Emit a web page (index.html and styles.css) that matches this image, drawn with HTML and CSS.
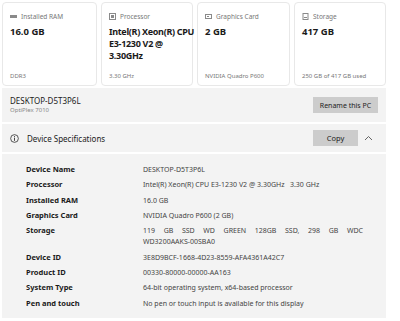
FILE: index.html
```html
<!DOCTYPE html>
<html lang="en">
<head>
    <meta charset="UTF-8">
    <meta name="viewport" content="width=device-width, initial-scale=1.0">
    <title>About</title>
    <link rel="stylesheet" href="styles.css">
</head>
<body>
    <div class="page">
        <div class="cards">
            <div class="card">
                <div class="card-head">
                    <svg width="7" height="7" viewBox="0 0 7 7"><rect x="0" y="2" width="7" height="3" fill="#8a8a8a"/></svg>
                    <span>Installed RAM</span>
                </div>
                <div class="card-value">16.0 GB</div>
                <div class="card-foot">DDR3</div>
            </div>
            <div class="card">
                <div class="card-head">
                    <svg width="7" height="7" viewBox="0 0 7 7"><rect x="0.5" y="0.5" width="6" height="6" fill="none" stroke="#8a8a8a"/><rect x="2" y="2" width="3" height="3" fill="#8a8a8a"/></svg>
                    <span>Processor</span>
                </div>
                <div class="card-value tight">Intel(R) Xeon(R) CPU<br>E3-1230 V2 @<br>3.30GHz</div>
                <div class="card-foot">3.30 GHz</div>
            </div>
            <div class="card">
                <div class="card-head">
                    <svg width="7" height="7" viewBox="0 0 7 7"><rect x="0.5" y="1.5" width="6" height="4" fill="none" stroke="#8a8a8a"/><rect x="2" y="3" width="2" height="1" fill="#8a8a8a"/></svg>
                    <span>Graphics Card</span>
                </div>
                <div class="card-value">2 GB</div>
                <div class="card-foot">NVIDIA Quadro P600</div>
            </div>
            <div class="card">
                <div class="card-head">
                    <svg width="7" height="7" viewBox="0 0 7 7"><rect x="1" y="0.5" width="5" height="6" fill="none" stroke="#8a8a8a"/><rect x="2" y="4" width="3" height="1" fill="#8a8a8a"/></svg>
                    <span>Storage</span>
                </div>
                <div class="card-value">417 GB</div>
                <div class="card-foot">250 GB of 417 GB used</div>
            </div>
        </div>

        <div class="panel pc-row">
            <div>
                <div class="pc-name">DESKTOP-D5T3P6L</div>
                <div class="pc-model">OptiPlex 7010</div>
            </div>
            <button class="btn btn-rename">Rename this PC</button>
        </div>

        <div class="panel spec-head">
            <svg class="info" width="9" height="9" viewBox="0 0 10 10"><circle cx="5" cy="5" r="4.3" fill="none" stroke="#333" stroke-width="0.9"/><rect x="4.5" y="2.3" width="1" height="1" fill="#333"/><rect x="4.5" y="4" width="1" height="3.6" fill="#333"/></svg>
            <span class="spec-title">Device Specifications</span>
            <button class="btn btn-copy">Copy</button>
            <svg class="chevron" width="9" height="6" viewBox="0 0 9 6"><polyline points="1,5 4.5,1.5 8,5" fill="none" stroke="#555" stroke-width="0.9"/></svg>
        </div>

        <div class="panel specs">
            <div class="spec-label">Device Name</div>
            <div class="spec-value">DESKTOP-D5T3P6L</div>
            <div class="spec-label">Processor</div>
            <div class="spec-value">Intel(R) Xeon(R) CPU E3-1230 V2 @ 3.30GHz&nbsp;&nbsp; 3.30 GHz</div>
            <div class="spec-label">Installed RAM</div>
            <div class="spec-value">16.0 GB</div>
            <div class="spec-label">Graphics Card</div>
            <div class="spec-value">NVIDIA Quadro P600 (2 GB)</div>
            <div class="spec-label">Storage</div>
            <div class="spec-value justify">119 GB SSD WD GREEN 128GB SSD, 298 GB WDC <span class="nowrap">WD3200AAKS-00SBA0</span></div>
            <div class="spec-label">Device ID</div>
            <div class="spec-value">3E8D9BCF-1668-4D23-8559-AFA4361A42C7</div>
            <div class="spec-label">Product ID</div>
            <div class="spec-value">00330-80000-00000-AA163</div>
            <div class="spec-label">System Type</div>
            <div class="spec-value">64-bit operating system, x64-based processor</div>
            <div class="spec-label">Pen and touch</div>
            <div class="spec-value">No pen or touch input is available for this display</div>
        </div>
    </div>
</body>
</html>
```

FILE: styles.css
```css
body {
    margin: 0;
    background: #ffffff;
    font-family: "Noto Sans", "Open Sans", sans-serif;
    color: #1a1a1a;
}
.page {
    width: 384px;
    padding: 2px 0 0 2px;
}
.cards {
    display: grid;
    grid-template-columns: 95px 92px 93px 92px;
    gap: 4px;
    margin-bottom: 2px;
}
.card {
    height: 84px;
    box-sizing: border-box;
    border: 1px solid #e8e8e8;
    border-radius: 4px;
    padding: 9px 7px 5px;
    display: flex;
    flex-direction: column;
}
.card-head {
    display: flex;
    align-items: center;
    gap: 4px;
    font-size: 6.5px;
    color: #777;
    height: 8px;
}
.card-value {
    margin-top: 6px;
    font-size: 9.5px;
    font-weight: 700;
    line-height: 12px;
    color: #1a1a1a;
}
.tight {
    white-space: nowrap;
    font-size: 9px;
    letter-spacing: -0.3px;
}
.card-foot {
    margin-top: auto;
    font-size: 6px;
    color: #777;
}
.panel {
    background: #f3f3f3;
}
.pc-row {
    display: flex;
    align-items: center;
    justify-content: space-between;
    height: 34px;
    padding: 0 8px;
    margin-bottom: 2px;
}
.pc-name {
    font-size: 8px;
    color: #222;
    line-height: 11px;
}
.pc-model {
    font-size: 6px;
    color: #888;
    line-height: 9px;
}
.btn {
    border: none;
    background: #cccccc;
    font-family: "Noto Sans", "Open Sans", sans-serif;
    color: #222;
    padding: 0;
    height: 16px;
}
.btn-rename {
    width: 65px;
    font-size: 7px;
}
.spec-head {
    display: flex;
    align-items: center;
    height: 28px;
    padding: 0 8px;
    margin-bottom: 2px;
}
.info {
    margin-right: 8px;
}
.spec-title {
    font-size: 8px;
    color: #222;
    flex: 1;
}
.btn-copy {
    width: 45px;
    font-size: 7.5px;
    margin-right: 6px;
}
.chevron {
    margin-right: 5px;
}
.specs {
    display: grid;
    grid-template-columns: 117px 220px;
    padding: 10px 0 9px 24px;
    row-gap: 4px;
    height: 164px;
    box-sizing: border-box;
}
.spec-label {
    font-size: 7.5px;
    font-weight: 700;
    color: #1a1a1a;
    line-height: 11px;
}
.spec-value {
    font-size: 7px;
    color: #444;
    line-height: 11px;
}
.justify {
    text-align: justify;
}
.nowrap {
    white-space: nowrap;
}
```
